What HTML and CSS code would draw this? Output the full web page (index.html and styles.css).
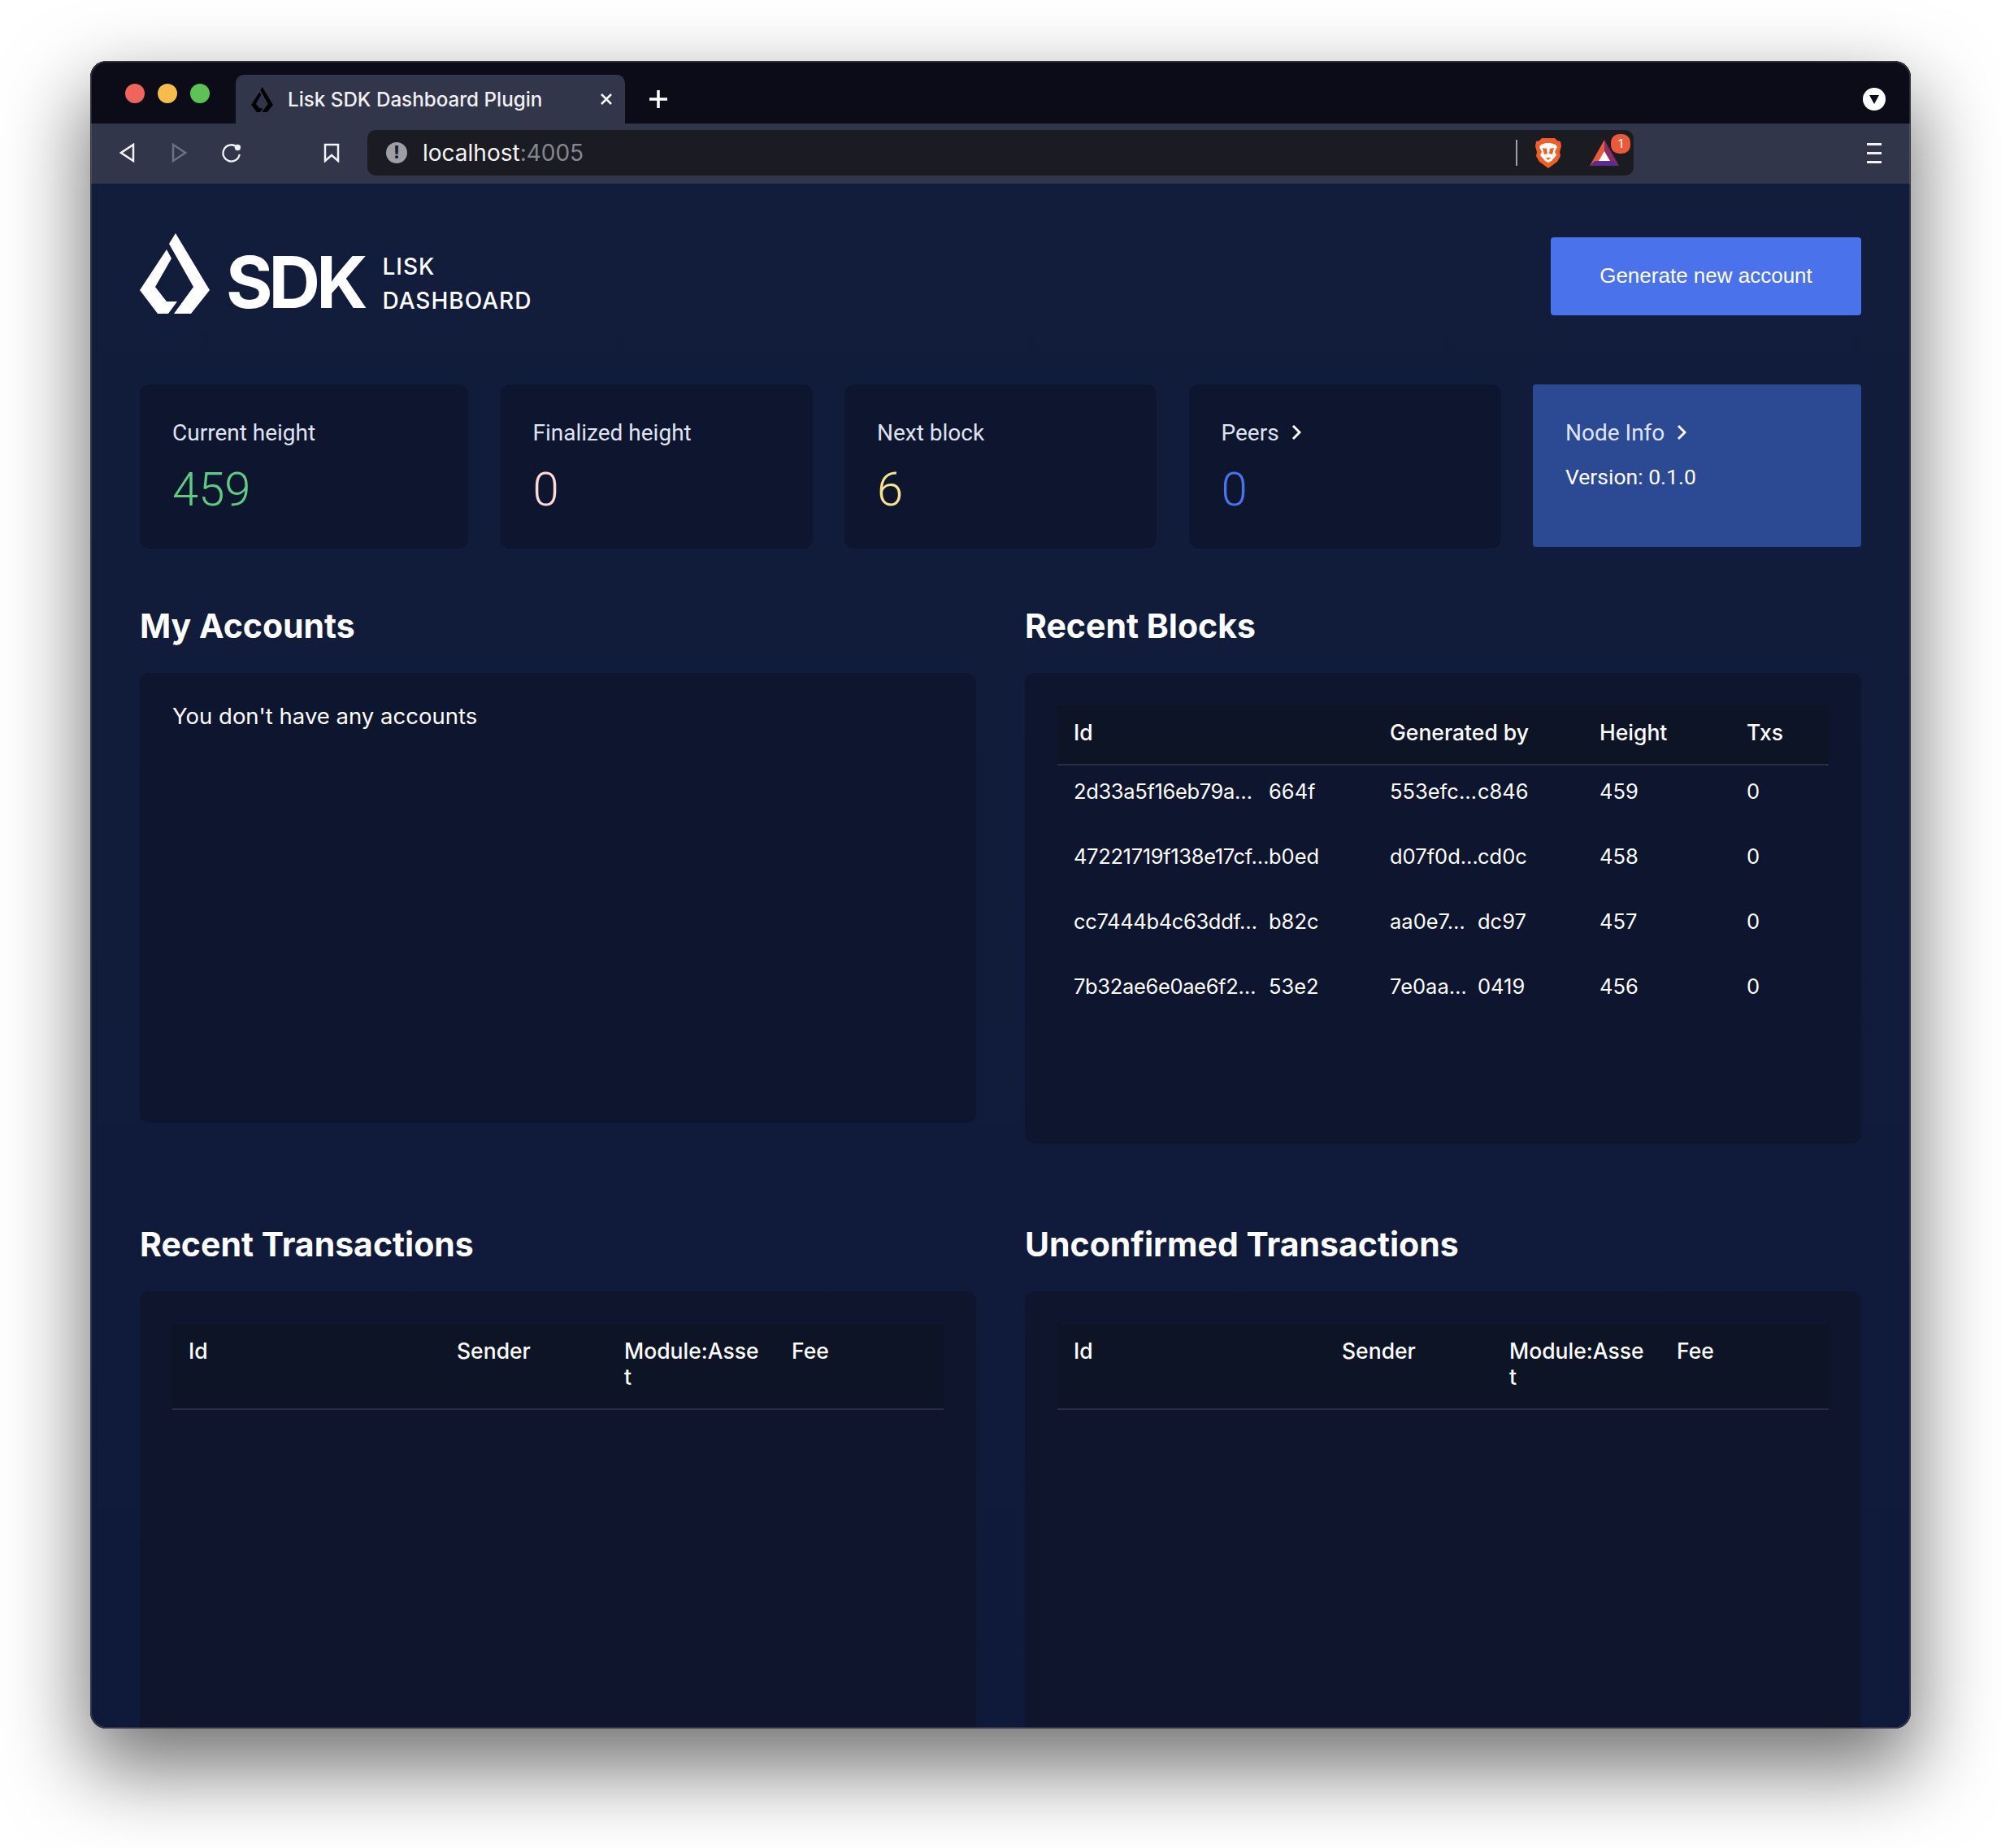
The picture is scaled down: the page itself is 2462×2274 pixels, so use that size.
FILE: index.html
```html
<!doctype html>
<html>
<head>
<meta charset="utf-8">
<title>Lisk SDK Dashboard Plugin</title>
<link rel="stylesheet" href="styles.css">
</head>
<body>
<svg class="defs" width="0" height="0">
	<symbol id="lisk" viewBox="0 0 86 99">
		<path d="M44 0 86 70 63 99H42L66 66 36 13Z"/>
		<path d="M33 20 39 31 19 66 33 84H46L35 99H22L0 70Z"/>
	</symbol>
</svg>
<div class="window">
	<div class="titlebar">
		<div class="lights">
			<span class="light light-red"></span>
			<span class="light light-yellow"></span>
			<span class="light light-green"></span>
		</div>
		<div class="tab">
			<svg class="favicon"><use href="#lisk"/></svg>
			<span class="tab-title">Lisk SDK Dashboard Plugin</span>
			<svg class="tab-close" viewBox="0 0 16 16"><path d="M2 2 14 14M14 2 2 14"/></svg>
		</div>
		<svg class="tab-new" viewBox="0 0 24 24"><path d="M12 1V23M1 12H23"/></svg>
		<div class="tab-menu"><svg viewBox="0 0 14 14"><path d="M1 2H13L7 13Z"/></svg></div>
	</div>
	<div class="toolbar">
		<svg class="nav-icon" viewBox="0 0 19 24"><path d="M17 2V22L2 12Z"/></svg>
		<svg class="nav-icon forward" viewBox="0 0 19 24"><path d="M2 2V22L17 12Z"/></svg>
		<svg class="nav-icon reload" viewBox="0 0 28 26"><path d="M20 4.5A11 11 0 1 0 24.500 15"/><circle class="dot" cx="22" cy="6" r="4"/></svg>
		<svg class="nav-icon bookmark" viewBox="0 0 20 24"><path d="M2 2H18V22L10 15 2 22Z"/></svg>
		<div class="address">
			<span class="info">!</span>
			<span class="url">localhost<span class="port">:4005</span></span>
			<span class="sep"></span>
			<svg class="brave" viewBox="0 0 32 37">
				<path fill="#f15f26" d="M8 0H24L27 3 31 4 32 10 30 17 31 22 27 29 16 37 5 29 1 22 2 17 0 10 1 4 5 3Z"/>
				<path fill="#fff" d="M7 8 13 6H19L25 8 27 11 24 17 26 21 20 28 16 30 12 28 6 21 8 17 5 11Z"/>
				<path fill="#f15f26" d="M9 12 14 13 15 19 11 20ZM23 12 18 13 17 19 21 20ZM13 24H19L16 27Z"/>
			</svg>
			<div class="bat">
				<svg viewBox="0 0 36 32">
					<path fill="#e9593a" d="M18 0 0 32H12L18 22Z"/>
					<path fill="#8b2a66" d="M18 0 36 32H24L18 22Z"/>
					<path fill="#5a2d8c" d="M0 32H36L30 26H6Z"/>
					<path fill="#fff" d="M18 14 25 26H11Z"/>
				</svg>
				<span class="badge">1</span>
			</div>
		</div>
		<div class="hamburger"><span></span><span></span><span></span></div>
	</div>
	<div class="page">
		<div class="header">
			<div class="logo">
				<svg class="logo-mark"><use href="#lisk"/></svg>
				<span class="logo-sdk">SDK</span>
				<div class="logo-sub">
					<span>LISK</span>
					<span>DASHBOARD</span>
				</div>
			</div>
			<button class="btn-new">Generate new account</button>
		</div>
		<div class="stats">
			<div class="stat">
				<div class="stat-label">Current height</div>
				<div class="stat-value green">459</div>
			</div>
			<div class="stat">
				<div class="stat-label">Finalized height</div>
				<div class="stat-value pink">0</div>
			</div>
			<div class="stat">
				<div class="stat-label">Next block</div>
				<div class="stat-value yellow">6</div>
			</div>
			<div class="stat">
				<div class="stat-label">Peers <svg class="chev" viewBox="0 0 12 20"><path d="M2 2 10 10 2 18"/></svg></div>
				<div class="stat-value blue">0</div>
			</div>
			<div class="stat node">
				<div class="stat-label">Node Info <svg class="chev" viewBox="0 0 12 20"><path d="M2 2 10 10 2 18"/></svg></div>
				<div class="node-version">Version: 0.1.0</div>
			</div>
		</div>
		<div class="sections">
			<div class="section upper">
				<h2>My Accounts</h2>
				<div class="panel accounts">You don't have any accounts</div>
			</div>
			<div class="section upper">
				<h2>Recent Blocks</h2>
				<div class="panel blocks">
					<table class="tbl">
						<colgroup><col class="b1"><col class="b2"><col class="b3"><col></colgroup>
						<thead><tr><th>Id</th><th>Generated by</th><th>Height</th><th>Txs</th></tr></thead>
						<tbody>
							<tr>
								<td><span class="h1">2d33a5f16eb79a…</span><span>664f</span></td>
								<td><span class="h2">553efc…</span><span>c846</span></td>
								<td>459</td><td>0</td>
							</tr>
							<tr>
								<td><span class="h1">47221719f138e17cf…</span><span>b0ed</span></td>
								<td><span class="h2">d07f0d…</span><span>cd0c</span></td>
								<td>458</td><td>0</td>
							</tr>
							<tr>
								<td><span class="h1">cc7444b4c63ddf…</span><span>b82c</span></td>
								<td><span class="h2">aa0e7…</span><span>dc97</span></td>
								<td>457</td><td>0</td>
							</tr>
							<tr>
								<td><span class="h1">7b32ae6e0ae6f2…</span><span>53e2</span></td>
								<td><span class="h2">7e0aa…</span><span>0419</span></td>
								<td>456</td><td>0</td>
							</tr>
						</tbody>
					</table>
				</div>
			</div>
			<div class="section">
				<h2>Recent Transactions</h2>
				<div class="panel txs">
					<table class="tbl">
						<colgroup><col class="t1"><col class="t2"><col class="t3"><col></colgroup>
						<thead><tr><th>Id</th><th>Sender</th><th>Module:Asse<wbr>t</th><th>Fee</th></tr></thead>
					</table>
				</div>
			</div>
			<div class="section">
				<h2>Unconfirmed Transactions</h2>
				<div class="panel txs">
					<table class="tbl">
						<colgroup><col class="t1"><col class="t2"><col class="t3"><col></colgroup>
						<thead><tr><th>Id</th><th>Sender</th><th>Module:Asse<wbr>t</th><th>Fee</th></tr></thead>
					</table>
				</div>
			</div>
		</div>
	</div>
</div>
</body>
</html>
```

FILE: styles.css
```css
html,body{margin:0;padding:0;background:#fff;}
body{font-family:"Inter","Liberation Sans",sans-serif;height:2274px;overflow:hidden;}
.defs{position:absolute;}

.window{position:relative;width:2240px;height:2052px;margin:75px 0 0 111px;border-radius:20px;overflow:hidden;display:flex;flex-direction:column;background:#0f1a3a;box-shadow:0 44px 100px 6px rgba(0,0,0,.55);}
.window::after{content:"";position:absolute;inset:0;border-radius:20px;box-shadow:inset 0 0 0 1px #33343c,inset 0 0 0 2px rgba(255,255,255,.12);pointer-events:none;}

.titlebar{height:77px;flex:none;background:#0b0c17;display:flex;align-items:flex-end;padding:0 31px 0 43px;}
.lights{display:flex;gap:16px;align-self:flex-start;margin-top:28px;}
.light{width:24px;height:24px;border-radius:50%;}
.light-red{background:#f0655b;}
.light-yellow{background:#f7bd4c;}
.light-green{background:#5cc455;}
.tab{width:479px;height:60px;margin-left:32px;background:#32364a;border-radius:10px 10px 0 0;display:flex;align-items:center;padding:0 15px 0 19px;box-sizing:border-box;}
.favicon{width:27px;height:31px;fill:#000;}
.tab-title{margin-left:18px;color:#f0f0f2;font-size:24.200px;font-weight:500;white-space:nowrap;}
.tab-close{width:16px;height:16px;margin-left:auto;stroke:#fff;stroke-width:2.500;fill:none;}
.tab-new{width:24px;height:24px;margin:0 0 18px 29px;stroke:#fff;stroke-width:3.500;fill:none;}
.tab-menu{width:28px;height:28px;border-radius:50%;background:#fff;margin:0 0 16px auto;display:flex;align-items:center;justify-content:center;}
.tab-menu svg{width:14px;height:14px;fill:#0b0c17;}

.toolbar{height:74px;flex:none;background:#32364a;display:flex;align-items:center;padding:0 0 2px 36px;box-sizing:border-box;}
.nav-icon{width:19px;height:24px;flex:none;fill:none;stroke:#f2f2f4;stroke-width:2.500;margin-right:45px;}
.forward{stroke:#6d7080;margin-right:41px;}
.reload{width:28px;margin-right:99px;}
.reload .dot{fill:#f2f2f4;stroke:none;}
.bookmark{width:20px;margin-right:34px;}
.address{width:1558px;height:56px;flex:none;background:#1b1c21;border-radius:10px;display:flex;align-items:center;padding-left:23px;box-sizing:border-box;}
.info{width:26px;height:26px;border-radius:50%;background:#9ca0a6;color:#1b1c21;font-size:21px;font-weight:800;text-align:center;line-height:26px;}
.url{margin-left:19px;color:#f4f4f6;font-size:28px;}
.port{color:#85878e;}
.sep{width:2px;height:32px;background:#a0a2a8;margin-left:auto;}
.brave{width:32px;height:37px;margin-left:22px;}
.bat{width:36px;height:32px;margin:0 18px 0 35px;position:relative;}
.bat svg{width:36px;height:32px;display:block;}
.badge{position:absolute;left:26px;top:-7px;width:24px;height:24px;border-radius:10px;background:#e9593a;color:#fff;font-size:15px;text-align:center;line-height:24px;}
.hamburger{margin-left:287px;width:18px;display:flex;flex-direction:column;gap:8px;}
.hamburger span{height:3px;background:#f2f2f4;}

.page{flex:1;background:linear-gradient(#121d3c,#0f1a3a);padding:61px 61px 0;min-height:0;}
.header{display:flex;justify-content:space-between;align-items:flex-start;height:101px;}
.logo{display:flex;align-items:flex-start;}
.logo-mark{width:86px;height:99px;fill:#fff;}
.logo-sdk{margin:21px 0 0 20px;color:#fff;font-size:88px;font-weight:700;line-height:78px;letter-spacing:-5px;}
.logo-sub{margin-left:23px;display:flex;flex-direction:column;color:#fff;font-size:28px;font-weight:500;line-height:42px;letter-spacing:1px;padding-top:20px;}
.btn-new{width:382px;height:96px;margin-top:5px;padding-bottom:3px;background:#4a72ea;color:#fff;border:0;border-radius:4px;font-family:"Liberation Sans",sans-serif;font-size:26px;}

.stats{display:grid;grid-template-columns:404px 384px 384px 384px 404px;gap:39.500px;margin-top:85px;align-items:start;}
.stat{height:202px;background:#0e152e;border-radius:12px;padding:40px;box-sizing:border-box;}
.stat-label{font-family:"Roboto",sans-serif;font-size:28px;line-height:40px;color:#dfe3f0;}
.stat-value{font-family:"Roboto",sans-serif;font-weight:300;font-size:58px;line-height:60px;margin-top:19px;}
.green{color:#5dcd82;}
.pink{color:#fcd9d6;}
.yellow{color:#f8e58a;}
.blue{color:#4a72ea;}
.chev{width:12px;height:20px;margin-left:8px;fill:none;stroke:#fff;stroke-width:3;}
.node{background:#2c4a94;height:200px;border-radius:4px;}
.node-version{font-family:"Roboto",sans-serif;font-size:26.500px;line-height:40px;color:#fff;margin-top:14px;}

.sections{display:grid;grid-template-columns:1029px 1029px;column-gap:60px;margin-top:63px;}
.upper{height:761px;}
h2{margin:0 0 26px;color:#fff;font-size:41px;font-weight:700;line-height:64px;}
.panel{background:#0e152e;border-radius:12px;padding:40px;box-sizing:border-box;color:#fff;font-size:27.500px;line-height:32px;}
.accounts{height:554px;padding-top:37px;}
.blocks{height:579px;}
.txs{height:700px;background:#0e152c;}

.tbl{width:100%;border-collapse:collapse;table-layout:fixed;font-size:25.500px;line-height:32px;color:#fff;}
.tbl th{text-align:left;font-size:26.500px;font-weight:500;vertical-align:top;padding:17px 20px 23px;background:#0d1426;border-bottom:2px solid #2a2d42;}
.tbl td{padding:16px 20px 32px;font-weight:400;white-space:nowrap;}
.b1{width:389px;}
.b2{width:258px;}
.b3{width:181px;}
.t1{width:330px;}
.t2{width:206px;}
.t3{width:206px;}
.h1{display:inline-block;width:240px;letter-spacing:-.350px;white-space:nowrap;}
.h2{display:inline-block;width:108px;}
```
